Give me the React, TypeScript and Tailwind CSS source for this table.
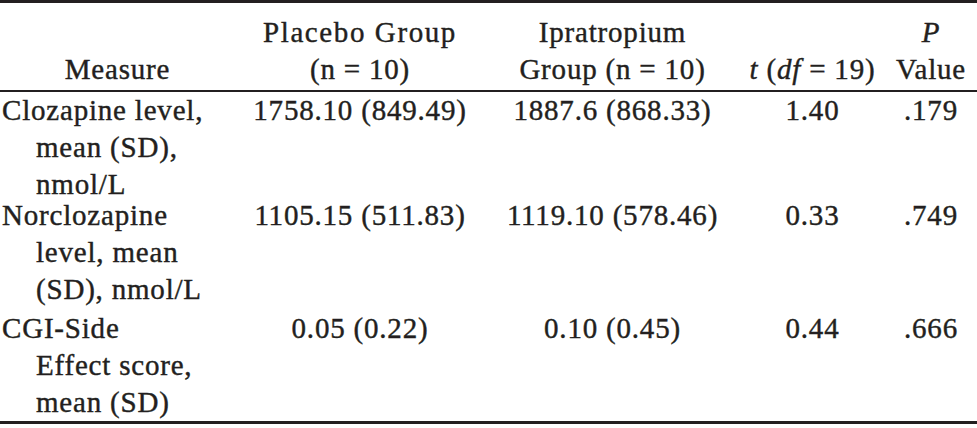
import React from "react";

const cols = "grid grid-cols-[235px_250px_255px_145px_92px]";

function Row({
  lines,
  values,
  className,
}: {
  lines: string[];
  values: string[];
  className?: string;
}) {
  return (
    <div className={`${cols} items-start ${className ?? ""}`}>
      <div className="flex flex-col pl-[2px]">
        {lines.map((l, i) => (
          <div key={i} className={i === 0 ? "whitespace-nowrap" : "whitespace-nowrap pl-[34px]"}>
            {l}
          </div>
        ))}
      </div>
      {values.map((v, i) => (
        <div key={i} className="text-center whitespace-nowrap">
          {v}
        </div>
      ))}
    </div>
  );
}

export default function App() {
  return (
    <div className="w-[977px] h-[428px] bg-white text-[#231f20] font-['Liberation_Serif',serif] text-[29px] leading-[37px] tracking-[0.8px] [-webkit-text-stroke:0.4px_#231f20]">
      <div className="border-t-[3px] border-[#231f20]" />
      <div className={`${cols} pt-[11px] pb-[2px] border-b-[2px] border-[#231f20]`}>
        <div className="flex flex-col justify-end text-center">
          <div>Measure</div>
        </div>
        <div className="flex flex-col text-center">
          <div className="whitespace-nowrap tracking-[1.6px]">Placebo Group</div>
          <div>(n = 10)</div>
        </div>
        <div className="flex flex-col text-center">
          <div>Ipratropium</div>
          <div className="whitespace-nowrap">Group (n = 10)</div>
        </div>
        <div className="flex flex-col justify-end text-center">
          <div className="whitespace-nowrap">
            <i>t</i> (<i>df</i> = 19)
          </div>
        </div>
        <div className="flex flex-col text-center">
          <div>
            <i>P</i>
          </div>
          <div>Value</div>
        </div>
      </div>
      <div>
        <Row
          className="-mb-[6px]"
          lines={["Clozapine level,", "mean (SD),", "nmol/L"]}
          values={["1758.10 (849.49)", "1887.6 (868.33)", "1.40", ".179"]}
        />
        <Row
          className="mb-[2px]"
          lines={["Norclozapine", "level, mean", "(SD), nmol/L"]}
          values={["1105.15 (511.83)", "1119.10 (578.46)", "0.33", ".749"]}
        />
        <Row
          lines={["CGI-Side", "Effect score,", "mean (SD)"]}
          values={["0.05 (0.22)", "0.10 (0.45)", "0.44", ".666"]}
        />
      </div>
      <div className="border-t-[3px] border-[#231f20]" />
    </div>
  );
}
